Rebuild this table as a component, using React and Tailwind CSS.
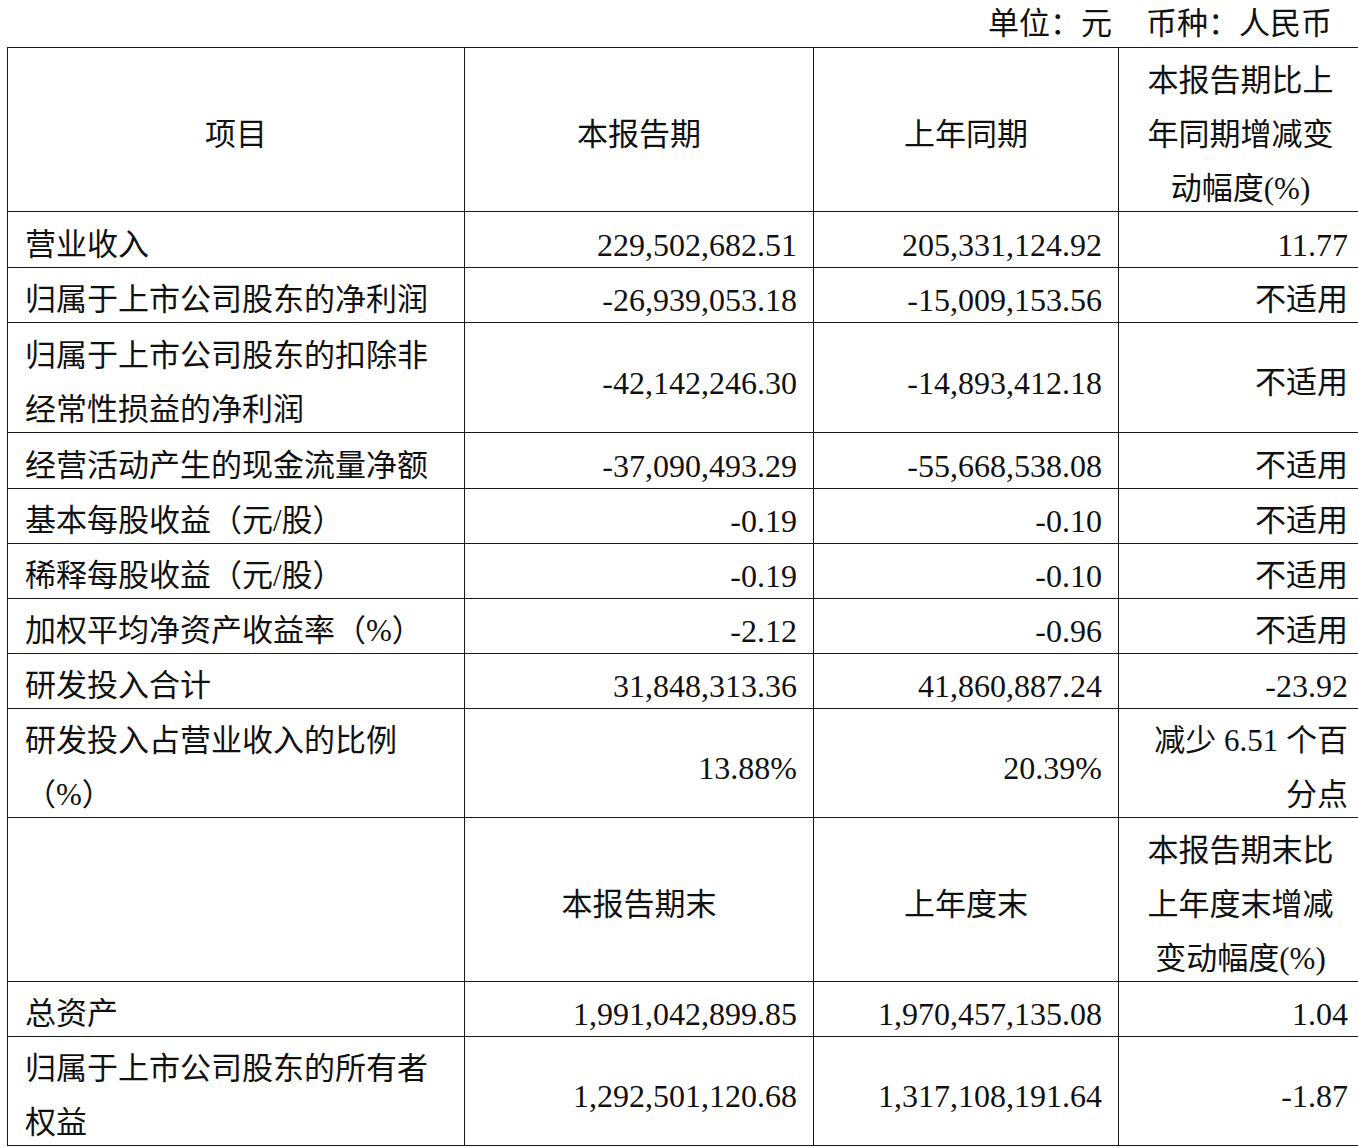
import React from 'react';

const rows = [
    { label: ['营业收入'], cur: '229,502,682.51', prev: '205,331,124.92', chg: ['11.77'], h: 'h-[56px]' },
    { label: ['归属于上市公司股东的净利润'], cur: '-26,939,053.18', prev: '-15,009,153.56', chg: ['不适用'], h: 'h-[55px]' },
    { label: ['归属于上市公司股东的扣除非', '经常性损益的净利润'], cur: '-42,142,246.30', prev: '-14,893,412.18', chg: ['不适用'], h: 'h-[110px]' },
    { label: ['经营活动产生的现金流量净额'], cur: '-37,090,493.29', prev: '-55,668,538.08', chg: ['不适用'], h: 'h-[56px]' },
    { label: ['基本每股收益（元/股）'], cur: '-0.19', prev: '-0.10', chg: ['不适用'], h: 'h-[55px]' },
    { label: ['稀释每股收益（元/股）'], cur: '-0.19', prev: '-0.10', chg: ['不适用'], h: 'h-[55px]' },
    { label: ['加权平均净资产收益率（%）'], cur: '-2.12', prev: '-0.96', chg: ['不适用'], h: 'h-[55px]' },
    { label: ['研发投入合计'], cur: '31,848,313.36', prev: '41,860,887.24', chg: ['-23.92'], h: 'h-[55px]' },
    { label: ['研发投入占营业收入的比例', '（%）'], cur: '13.88%', prev: '20.39%', chg: ['减少 6.51 个百', '分点'], h: 'h-[109px]' },
];

const bottomRows = [
    { label: ['总资产'], cur: '1,991,042,899.85', prev: '1,970,457,135.08', chg: ['1.04'], h: 'h-[55px]' },
    { label: ['归属于上市公司股东的所有者', '权益'], cur: '1,292,501,120.68', prev: '1,317,108,191.64', chg: ['-1.87'], h: 'h-[108px]' },
];

const cell = 'border-[1.5px] border-[#1a1a1a] align-middle';

// nudges the glyphs down a little so the baseline sits where the print layout has it
function Lines({ lines }) {
    return (
        <span className="block translate-y-[5px]">
            {lines.map((l, i) => (
                <React.Fragment key={i}>
                    {i > 0 && <br />}
                    {l}
                </React.Fragment>
            ))}
        </span>
    );
}

function DataRow({ row }) {
    const numeric = /^[-0-9.,%]+$/.test(row.chg[0]);
    return (
        <tr className={row.h}>
            <td className={`${cell} pl-[17px] text-left`}><Lines lines={row.label} /></td>
            <td className={`${cell} pr-[16px] text-right text-[32px]`}><Lines lines={[row.cur]} /></td>
            <td className={`${cell} pr-[16px] text-right text-[32px]`}><Lines lines={[row.prev]} /></td>
            <td className={`${cell} pr-[14px] text-right ${numeric ? 'text-[32px]' : ''}`}><Lines lines={row.chg} /></td>
        </tr>
    );
}

function HeaderRow({ a, b, c, d }) {
    return (
        <tr className="h-[164px]">
            <td className={`${cell} text-center`}><Lines lines={[a]} /></td>
            <td className={`${cell} text-center`}><Lines lines={[b]} /></td>
            <td className={`${cell} text-center`}><Lines lines={[c]} /></td>
            <td className={`${cell} text-center`}><Lines lines={d} /></td>
        </tr>
    );
}

export default function App() {
    return (
        <div className="w-[1358px] h-[1148px] overflow-hidden bg-white text-[#111] text-[31px] leading-[54px]" style={{ fontFamily: '"Liberation Serif", "Noto Sans CJK SC", serif' }}>
            <div className="h-[47px] flex items-center justify-end pr-[26px] leading-none">
                <span>单位：元</span>
                <span className="ml-[34px]">币种：人民币</span>
            </div>
            <table className="ml-[7px] w-[1355px] border-collapse table-fixed">
                <colgroup>
                    <col className="w-[457px]" />
                    <col className="w-[349px]" />
                    <col className="w-[305px]" />
                    <col className="w-[244px]" />
                </colgroup>
                <tbody>
                    <HeaderRow a="项目" b="本报告期" c="上年同期" d={['本报告期比上', '年同期增减变', '动幅度(%)']} />
                    {rows.map((r, i) => <DataRow key={i} row={r} />)}
                    <HeaderRow a="" b="本报告期末" c="上年度末" d={['本报告期末比', '上年度末增减', '变动幅度(%)']} />
                    {bottomRows.map((r, i) => <DataRow key={i} row={r} />)}
                </tbody>
            </table>
        </div>
    );
}
